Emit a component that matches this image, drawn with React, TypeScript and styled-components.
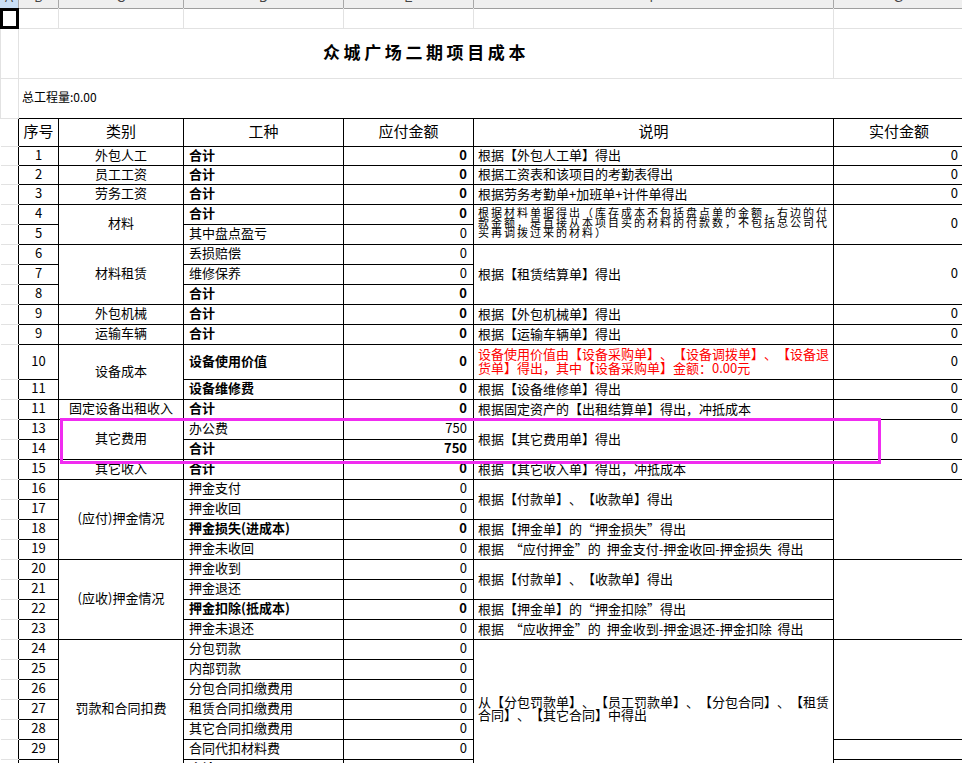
import React from "react";
import styled, { createGlobalStyle } from "styled-components";

const GlobalStyle = createGlobalStyle`
  html, body { margin: 0; padding: 0; background: #fff; overflow: hidden; }
  body {
    font-family: "Noto Sans CJK SC", "Liberation Sans", sans-serif;
    color: #000;
    text-spacing-trim: space-all;
  }
`;

const COL_WIDTHS = [18, 40, 125, 160, 130, 360, 131];
const HEAD_WIDTHS = [19, 40, 125, 160, 130, 360, 130];
const LETTERS = ["A", "B", "C", "D", "E", "F", "G"];

const Sheet = styled.div`
  position: relative;
  width: 962px;
  height: 763px;
  overflow: hidden;
`;

const ColHeaderBar = styled.div`
  display: flex;
  height: 8px;
  background: #efefef;
  overflow: hidden;
`;

const ColHeaderCell = styled.div<{ $w: number; $active?: boolean }>`
  flex: 0 0 ${(p) => p.$w}px;
  box-sizing: border-box;
  border-right: 1px solid #a8a8a8;
  background: ${(p) => (p.$active ? "#c9dff6" : "transparent")};
  text-align: center;
  overflow: hidden;
  font-family: "Liberation Sans", sans-serif;
  font-size: 12px;
  line-height: 14px;
  color: #444;
  span { display: block; margin-top: -9px; }
`;

const Grid = styled.table`
  border-collapse: collapse;
  table-layout: fixed;
  width: 964px;
`;

const Col = styled.col<{ $w: number }>`
  width: ${(p) => p.$w}px;
`;

const Row = styled.tr<{ $h: number }>`
  height: ${(p) => p.$h}px;
`;

const GapCell = styled.td<{ $edge?: boolean }>`
  padding: 0;
  border: 1px solid #e2e2e2;
  ${(p) => (p.$edge ? "border-top-color: #9e9e9e;" : "")}
`;

const Gutter = styled.td`
  padding: 0;
  border-top: 1px solid #e2e2e2;
  border-bottom: 1px solid #e2e2e2;
  border-left: none;
  border-right: none;
`;

const TitleCell = styled.td`
  padding: 0 0 4px 0;
  border: 1px solid #e2e2e2;
  text-align: center;
  font-size: 17px;
  font-weight: 700;
  letter-spacing: 3.6px;
  line-height: 20px;
`;

const SummaryCell = styled.td`
  padding: 0 0 4px 3px;
  border-top: 1px solid #e2e2e2;
  border-bottom: none;
  font-size: 12px;
  line-height: 14px;
  white-space: nowrap;
`;

const TCell = styled.td`
  border: 1px solid #000;
  padding: 0 0 3px 0;
  font-size: 13px;
  line-height: 14px;
  white-space: nowrap;
  overflow: hidden;
  vertical-align: middle;
`;

const HeadCell = styled(TCell)`
  font-size: 15px;
  line-height: 18px;
  text-align: center;
`;

const Seq = styled(TCell)`
  text-align: center;
`;

const Cat = styled(TCell)`
  text-align: center;
`;

const Kind = styled(TCell)<{ $bold?: boolean }>`
  padding-left: 5px;
  font-weight: ${(p) => (p.$bold ? 700 : 400)};
`;

const Amt = styled(TCell)<{ $bold?: boolean }>`
  text-align: right;
  padding-right: 6px;
  font-weight: ${(p) => (p.$bold ? 700 : 400)};
`;

const Note = styled(TCell)<{ $red?: boolean; $tight?: boolean }>`
  padding-left: 4px;
  white-space: pre;
  color: ${(p) => (p.$red ? "#ff0000" : "#000")};
  line-height: ${(p) => (p.$red ? 14 : 13)}px;
  ${(p) =>
    p.$tight
      ? `
    font-size: 11px;
    letter-spacing: 2px;
    line-height: 10px;
    padding-bottom: 6px;
  `
      : ""}
`;

const Paid = styled(TCell)`
  text-align: right;
  padding-right: 6px;
`;

const SelectionBox = styled.div`
  position: absolute;
  left: 0;
  top: 8px;
  width: 19px;
  height: 21px;
  box-sizing: border-box;
  border: 3px solid #000;
  background: #fff;
`;

const Highlight = styled.div`
  position: absolute;
  left: 60px;
  top: 418px;
  width: 821px;
  height: 46px;
  box-sizing: border-box;
  border: 3px solid #f02cf0;
  pointer-events: none;
`;

type Line = {
  h: number;
  seq: string;
  cat?: { text: string; span?: number };
  kind: string;
  kindBold?: boolean;
  amt: string;
  amtBold?: boolean;
  note?: { text: React.ReactNode; span?: number; red?: boolean; tight?: boolean };
  paid?: { text: string; span?: number };
};

const rows: Line[] = [
  { h: 19, seq: "1", cat: { text: "外包人工" }, kind: "合计", kindBold: true, amt: "0", amtBold: true, note: { text: "根据【外包人工单】得出" }, paid: { text: "0" } },
  { h: 19, seq: "2", cat: { text: "员工工资" }, kind: "合计", kindBold: true, amt: "0", amtBold: true, note: { text: "根据工资表和该项目的考勤表得出" }, paid: { text: "0" } },
  { h: 20, seq: "3", cat: { text: "劳务工资" }, kind: "合计", kindBold: true, amt: "0", amtBold: true, note: { text: "根据劳务考勤单+加班单+计件单得出" }, paid: { text: "0" } },
  {
    h: 20, seq: "4", cat: { text: "材料", span: 2 }, kind: "合计", kindBold: true, amt: "0", amtBold: true,
    note: { text: "根据材料单据得出（库存成本不包括盘点单的金额，右边的付\n款金额，是直接从本项目买的材料的付款数，不包括总公司代\n买再调拨过来的材料）", span: 2, tight: true },
    paid: { text: "0", span: 2 },
  },
  { h: 20, seq: "5", kind: "其中盘点盈亏", amt: "0" },
  { h: 20, seq: "6", cat: { text: "材料租赁", span: 3 }, kind: "丢损赔偿", amt: "0", note: { text: "根据【租赁结算单】得出", span: 3 }, paid: { text: "0", span: 3 } },
  { h: 20, seq: "7", kind: "维修保养", amt: "0" },
  { h: 20, seq: "8", kind: "合计", kindBold: true, amt: "0", amtBold: true },
  { h: 20, seq: "9", cat: { text: "外包机械" }, kind: "合计", kindBold: true, amt: "0", amtBold: true, note: { text: "根据【外包机械单】得出" }, paid: { text: "0" } },
  { h: 20, seq: "9", cat: { text: "运输车辆" }, kind: "合计", kindBold: true, amt: "0", amtBold: true, note: { text: "根据【运输车辆单】得出" }, paid: { text: "0" } },
  {
    h: 35, seq: "10", cat: { text: "设备成本", span: 2 }, kind: "设备使用价值", kindBold: true, amt: "0", amtBold: true,
    note: { text: "设备使用价值由【设备采购单】、【设备调拨单】、【设备退\n货单】得出，其中【设备采购单】金额：0.00元", red: true },
    paid: { text: "0" },
  },
  { h: 20, seq: "11", kind: "设备维修费", kindBold: true, amt: "0", amtBold: true, note: { text: "根据【设备维修单】得出" }, paid: { text: "0" } },
  { h: 20, seq: "11", cat: { text: "固定设备出租收入" }, kind: "合计", kindBold: true, amt: "0", amtBold: true, note: { text: "根据固定资产的【出租结算单】得出，冲抵成本" }, paid: { text: "0" } },
  { h: 20, seq: "13", cat: { text: "其它费用", span: 2 }, kind: "办公费", amt: "750", note: { text: "根据【其它费用单】得出", span: 2 }, paid: { text: "0", span: 2 } },
  { h: 20, seq: "14", kind: "合计", kindBold: true, amt: "750", amtBold: true },
  { h: 20, seq: "15", cat: { text: "其它收入" }, kind: "合计", kindBold: true, amt: "0", amtBold: true, note: { text: "根据【其它收入单】得出，冲抵成本" }, paid: { text: "0" } },
  { h: 20, seq: "16", cat: { text: "(应付)押金情况", span: 4 }, kind: "押金支付", amt: "0", note: { text: "根据【付款单】、【收款单】得出", span: 2 }, paid: { text: "", span: 4 } },
  { h: 20, seq: "17", kind: "押金收回", amt: "0" },
  { h: 20, seq: "18", kind: "押金损失(进成本)", kindBold: true, amt: "0", amtBold: true, note: { text: "根据【押金单】的“押金损失”得出" } },
  { h: 20, seq: "19", kind: "押金未收回", amt: "0", note: { text: "根据  “应付押金”的  押金支付-押金收回-押金损失  得出" } },
  { h: 20, seq: "20", cat: { text: "(应收)押金情况", span: 4 }, kind: "押金收到", amt: "0", note: { text: "根据【付款单】、【收款单】得出", span: 2 }, paid: { text: "", span: 4 } },
  { h: 20, seq: "21", kind: "押金退还", amt: "0" },
  { h: 20, seq: "22", kind: "押金扣除(抵成本)", kindBold: true, amt: "0", amtBold: true, note: { text: "根据【押金单】的“押金扣除”得出" } },
  { h: 20, seq: "23", kind: "押金未退还", amt: "0", note: { text: "根据  “应收押金”的  押金收到-押金退还-押金扣除  得出" } },
  {
    h: 20, seq: "24", cat: { text: "罚款和合同扣费", span: 7 }, kind: "分包罚款", amt: "0",
    note: { text: "从【分包罚款单】、【员工罚款单】、【分包合同】、【租赁\n合同】、【其它合同】中得出", span: 7 },
    paid: { text: "", span: 5 },
  },
  { h: 20, seq: "25", kind: "内部罚款", amt: "0" },
  { h: 20, seq: "26", kind: "分包合同扣缴费用", amt: "0" },
  { h: 20, seq: "27", kind: "租赁合同扣缴费用", amt: "0" },
  { h: 20, seq: "28", kind: "其它合同扣缴费用", amt: "0" },
  { h: 20, seq: "29", kind: "合同代扣材料费", amt: "0", paid: { text: "" } },
  { h: 20, seq: "30", kind: "合计", kindBold: true, amt: "0", amtBold: true, paid: { text: "" } },
];

export default function App() {
  return (
    <Sheet lang="zh-CN">
      <GlobalStyle />
      <ColHeaderBar>
        {LETTERS.map((l, i) => (
          <ColHeaderCell key={l} $w={HEAD_WIDTHS[i]} $active={i === 0}>
            <span>{l}</span>
          </ColHeaderCell>
        ))}
      </ColHeaderBar>
      <Grid>
        <colgroup>
          {COL_WIDTHS.map((w, i) => (
            <Col key={i} $w={w} />
          ))}
        </colgroup>
        <tbody>
          <Row $h={20}>
            {LETTERS.map((l) => (
              <GapCell key={l} $edge />
            ))}
          </Row>
          <Row $h={50}>
            <GapCell />
            <TitleCell colSpan={5}>众城广场二期项目成本</TitleCell>
            <GapCell />
          </Row>
          <Row $h={40}>
            <GapCell />
            <SummaryCell colSpan={6}>总工程量:0.00</SummaryCell>
          </Row>
          <Row $h={28}>
            <Gutter />
            <HeadCell>序号</HeadCell>
            <HeadCell>类别</HeadCell>
            <HeadCell>工种</HeadCell>
            <HeadCell>应付金额</HeadCell>
            <HeadCell>说明</HeadCell>
            <HeadCell>实付金额</HeadCell>
          </Row>
          {rows.map((r, i) => (
            <Row key={i} $h={r.h}>
              <Gutter />
              <Seq>{r.seq}</Seq>
              {r.cat && <Cat rowSpan={r.cat.span ?? 1}>{r.cat.text}</Cat>}
              <Kind $bold={r.kindBold}>{r.kind}</Kind>
              <Amt $bold={r.amtBold}>{r.amt}</Amt>
              {r.note && (
                <Note rowSpan={r.note.span ?? 1} $red={r.note.red} $tight={r.note.tight}>
                  {r.note.text}
                </Note>
              )}
              {r.paid && <Paid rowSpan={r.paid.span ?? 1}>{r.paid.text}</Paid>}
            </Row>
          ))}
        </tbody>
      </Grid>
      <SelectionBox />
      <Highlight />
    </Sheet>
  );
}
